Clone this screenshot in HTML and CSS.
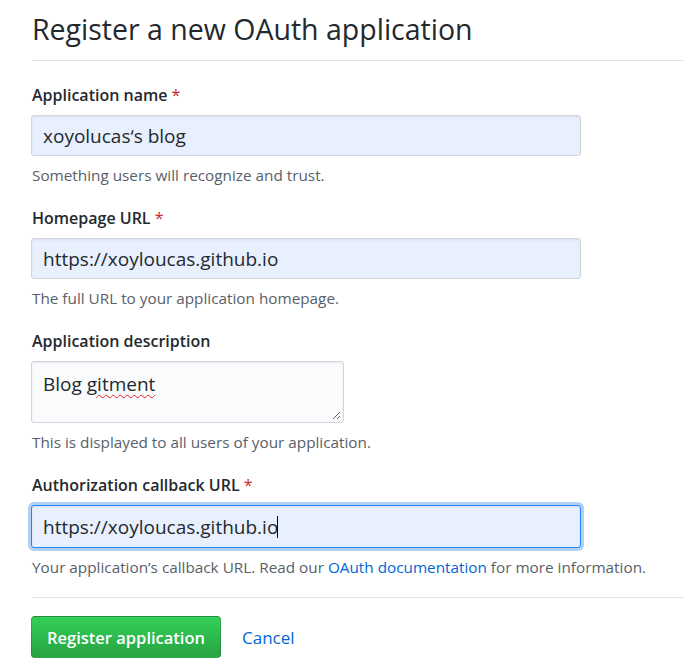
FILE: index.html
```html
<!DOCTYPE html>
<html>
<head>
<meta charset="utf-8">
<link rel="stylesheet" href="styles.css">
</head>
<body>
<div class="page">
  <h2 class="subhead">Register a new OAuth application</h2>
  <form class="form">
    <div class="group">
      <label class="label">Application name <span class="req">*</span></label>
      <div class="input autofill">xoyolucas‘s blog</div>
      <p class="note">Something users will recognize and trust.</p>
    </div>
    <div class="group">
      <label class="label">Homepage URL <span class="req">*</span></label>
      <div class="input autofill">https://xoyloucas.github.io</div>
      <p class="note">The full URL to your application homepage.</p>
    </div>
    <div class="group">
      <label class="label">Application description</label>
      <div class="textarea">Blog <span class="spell">gitment</span>
        <svg class="grip" width="9" height="9" viewBox="0 0 9 9"><path d="M8 1 L1 8 M8 5 L5 8" stroke="#6a6a6a" stroke-width="1"/></svg>
      </div>
      <p class="note">This is displayed to all users of your application.</p>
    </div>
    <div class="group last">
      <label class="label">Authorization callback URL <span class="req">*</span></label>
      <div class="input autofill focus">https://xoyloucas.github.io<span class="caret"></span></div>
      <p class="note">Your application’s callback URL. Read our <a class="link" href="#">OAuth documentation</a> for more information.</p>
    </div>
    <div class="actions">
      <button type="button" class="btn">Register application</button>
      <a class="link cancel" href="#">Cancel</a>
    </div>
  </form>
</div>
</body>
</html>
```

FILE: styles.css
```css
* { box-sizing: border-box; }
html, body { margin: 0; padding: 0; background: #fff; }
body {
  font-family: "Open Sans", "Noto Sans", sans-serif;
  color: #24292e;
}
.page {
  padding: 0 0 0 32px;
}
.subhead {
  margin: 0;
  padding: 12px 0 14px;
  font-size: 28.5px;
  font-weight: 400;
  line-height: 34px;
  border-bottom: 1px solid #e1e4e8;
}
.form { padding-top: 23px; }
.group { margin-bottom: 22px; }
.group.last { margin-bottom: 20px; }
.label {
  display: block;
  font-size: 16px;
  font-weight: 600;
  line-height: 22px;
  margin-bottom: 9px;
}
.req { color: #cb2431; font-weight: 400; }
.input {
  width: 550px;
  height: 41px;
  margin-left: -1px;
  padding: 0 11px;
  display: flex;
  align-items: center;
  font-size: 19px;
  border: 1px solid #d1d5da;
  border-radius: 3px;
  background: #fafbfc;
  box-shadow: inset 0 1px 2px rgba(27,31,35,0.075);
}
.autofill { background: #e8f0fe; }
.focus {
  height: 43px;
  border-color: #2188ff;
  box-shadow: inset 0 1px 2px rgba(27,31,35,0.075), 0 0 0 3px rgba(3,102,214,0.3);
}
.caret {
  display: inline-block;
  width: 1px;
  height: 22px;
  background: #000;
  margin-left: -1px;
}
.textarea {
  position: relative;
  width: 313px;
  height: 62px;
  margin-left: -1px;
  padding: 8px 11px;
  font-size: 19px;
  line-height: 28px;
  border: 1px solid #d1d5da;
  border-radius: 3px;
  background: #fafbfc;
  box-shadow: inset 0 1px 2px rgba(27,31,35,0.075);
}
.spell {
  text-decoration: underline wavy #e02020;
  text-decoration-thickness: 1px;
  text-underline-offset: 3px;
}
.grip { position: absolute; right: 2px; bottom: 2px; }
.note {
  margin: 9px 0 0;
  font-size: 15.3px;
  line-height: 20px;
  color: #586069;
}
.link { color: #0366d6; text-decoration: none; }
.actions {
  border-top: 1px solid #e1e4e8;
  padding-top: 18px;
  display: flex;
  align-items: center;
  gap: 21px;
}
.btn {
  margin-left: -1px;
  height: 42px;
  padding: 0 15px;
  font-family: inherit;
  font-size: 16.5px;
  font-weight: 600;
  color: #fff;
  background: linear-gradient(-180deg, #34d058 0%, #28a745 90%);
  border: 1px solid rgba(27,31,35,0.2);
  border-radius: 4px;
}
.cancel { font-size: 17px; }
```
